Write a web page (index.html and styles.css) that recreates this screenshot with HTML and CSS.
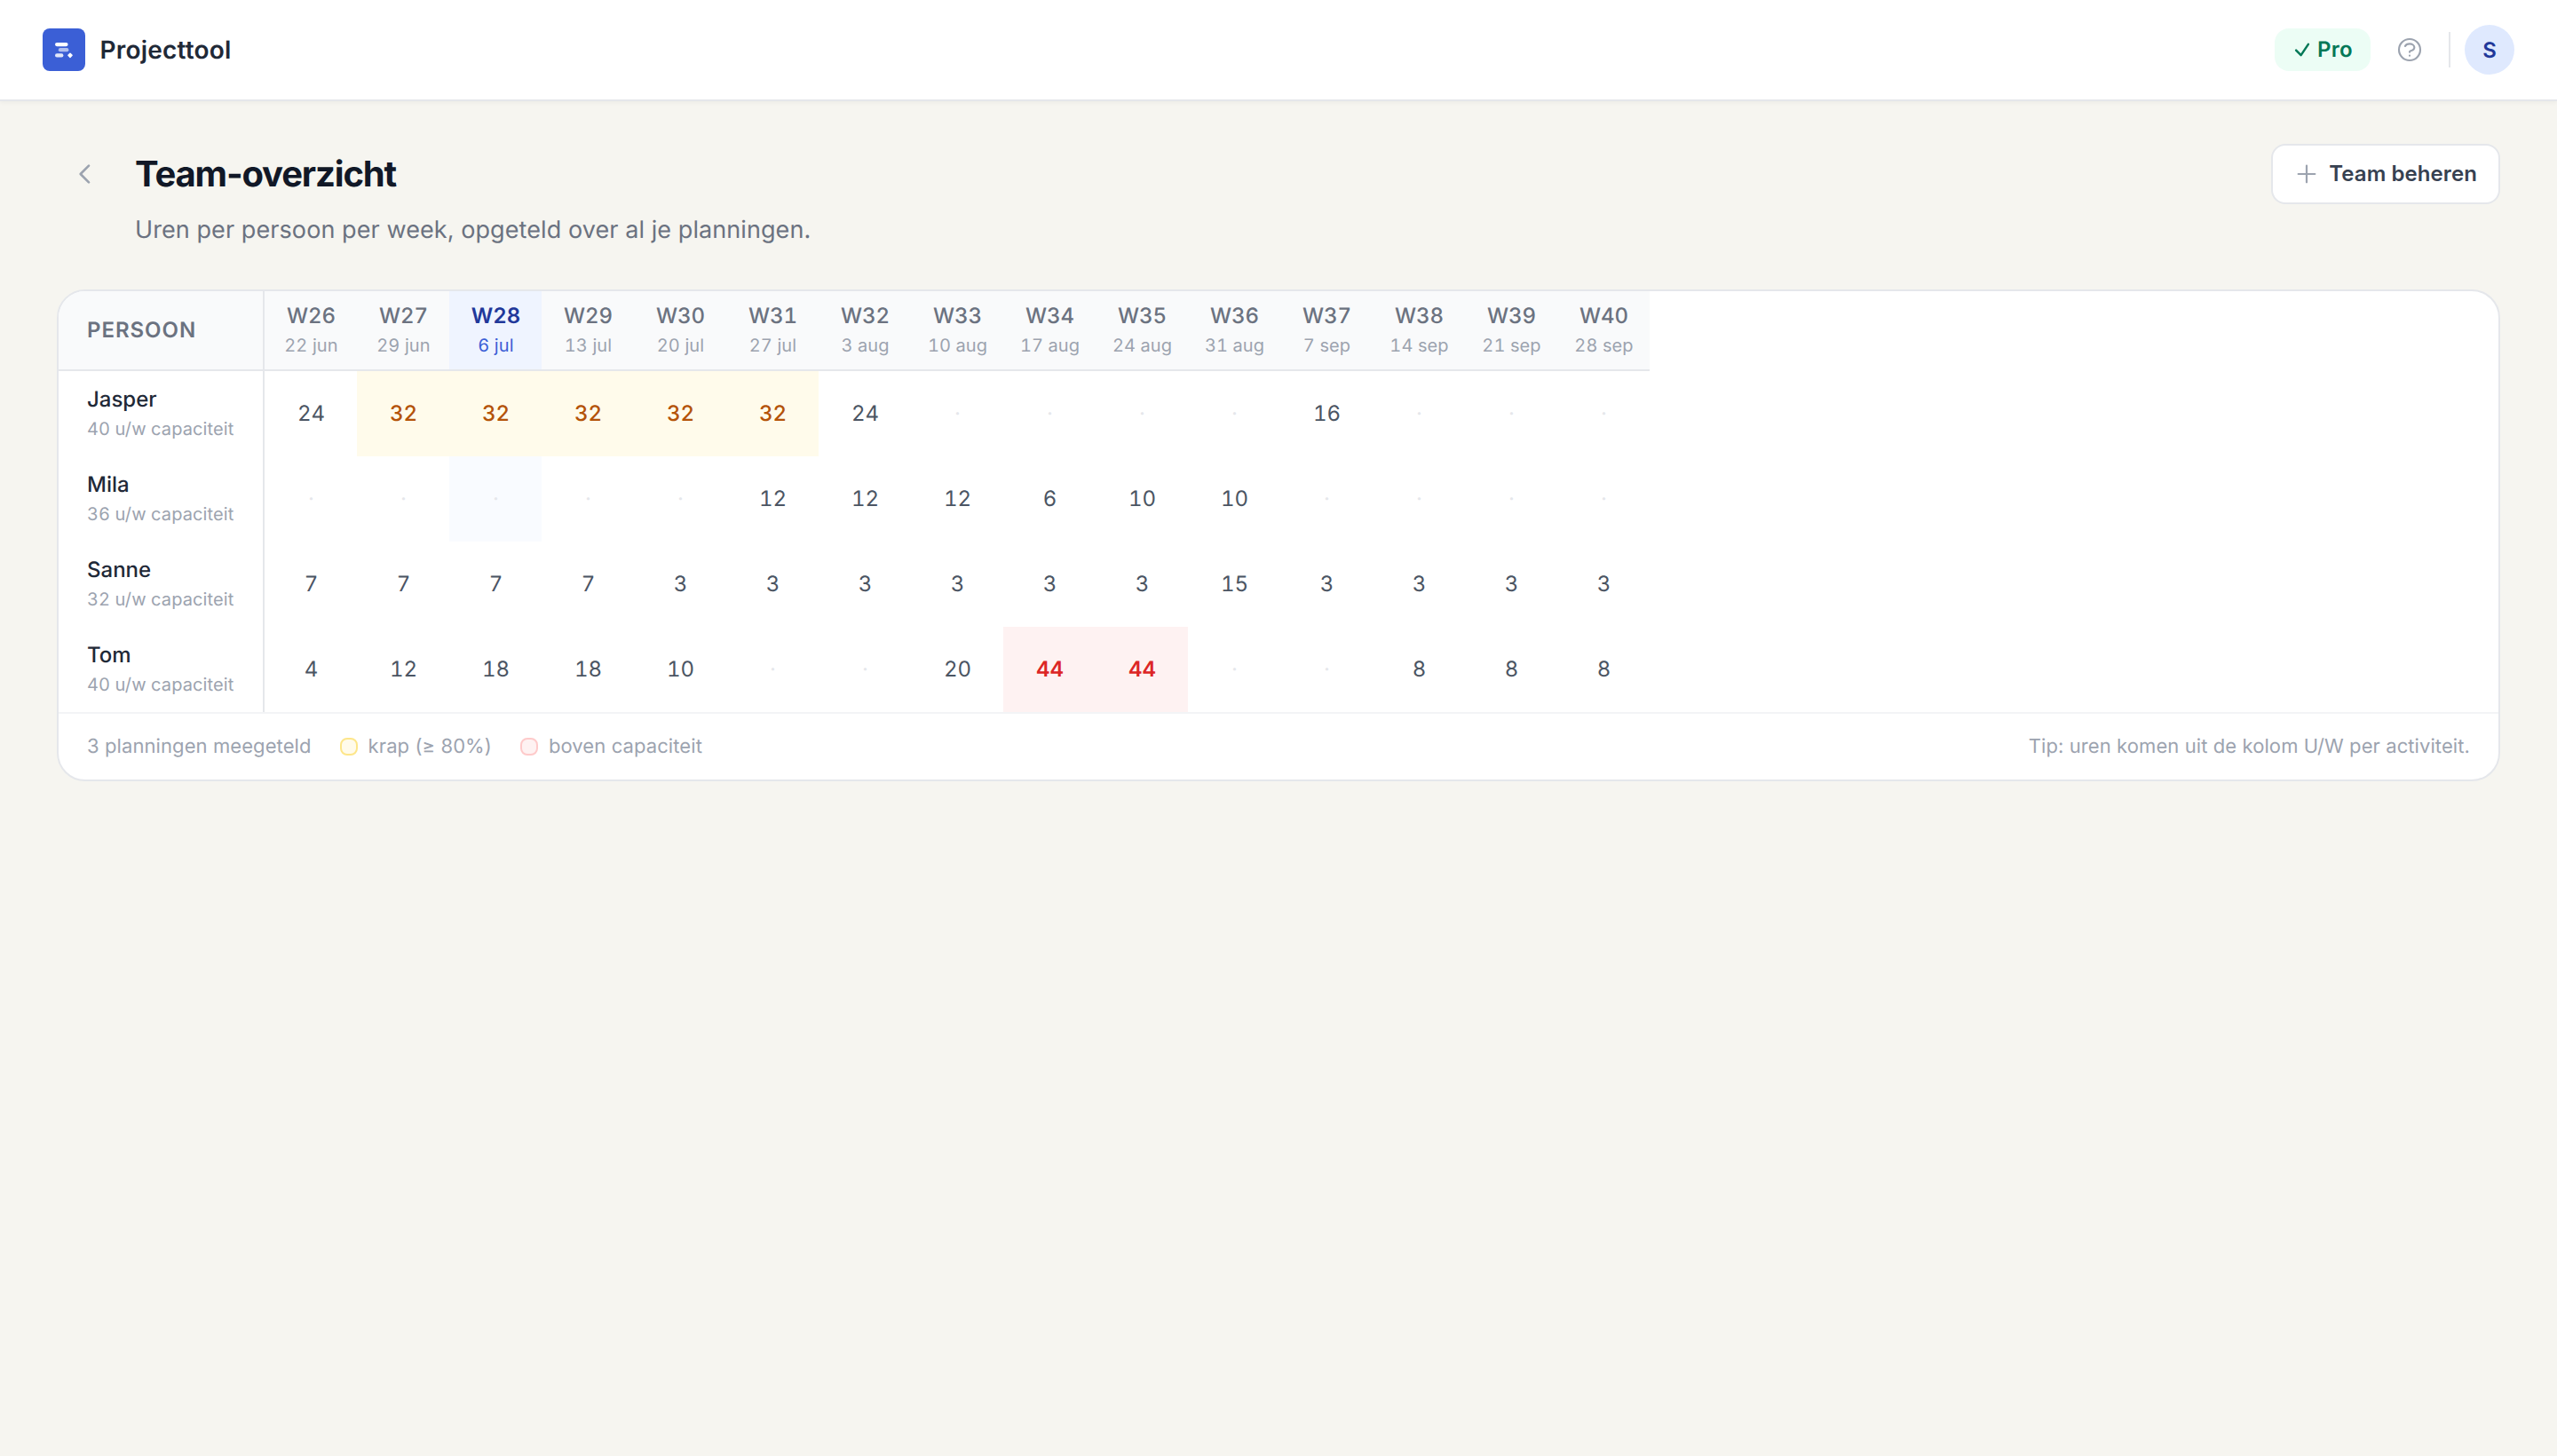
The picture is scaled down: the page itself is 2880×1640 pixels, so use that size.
FILE: index.html
```
<!DOCTYPE html>
<html lang="nl">
<head>
<meta charset="utf-8">
<title>Team-overzicht</title>
<link rel="stylesheet" href="styles.css">
</head>
<body>
<header class="topbar">
  <div class="brand">
    <svg class="logo" viewBox="0 0 48 48"><rect width="48" height="48" rx="8" fill="#3b5fd6"/><rect x="14" y="16" width="14.6" height="4.2" rx="2.1" fill="#fff"/><rect x="17.8" y="22.1" width="11.6" height="4.2" rx="2.1" fill="#fff" opacity=".6"/><rect x="14" y="28.3" width="9.4" height="4.2" rx="2.1" fill="#fff" opacity=".85"/><path d="M31 28.2l2.1 2.1-2.1 2.1-2.1-2.1z" fill="#fff" stroke="#fff" stroke-width="1.4" stroke-linejoin="round"/></svg>
    <span class="brand-name">Projecttool</span>
  </div>
  <div class="actions">
    <span class="plan"><svg class="plan-check" viewBox="0 0 24 24"><path d="m4.5 12.75 6 6 9-13.5"/></svg>Pro</span>
    <span class="help"><svg class="icon-lg" viewBox="0 0 24 24"><path d="M8.228 9c.549-1.165 2.03-2 3.772-2 2.21 0 4 1.343 4 3 0 1.4-1.278 2.575-3.006 2.907-.542.104-.994.54-.994 1.093m0 3h.01M21 12a9 9 0 11-18 0 9 9 0 0118 0z"/></svg></span>
    <span class="divider"></span>
    <span class="avatar">S</span>
  </div>
</header>
<main class="page">
  <div class="heading">
    <span class="back"><svg class="icon-lg" viewBox="0 0 24 24"><path d="M15 19l-7-7 7-7"/></svg></span>
    <h1 class="title">Team-overzicht</h1>
    <button class="manage"><svg class="icon-md" viewBox="0 0 24 24"><path d="M12 4v16m8-8H4"/></svg>Team beheren</button>
  </div>
  <p class="subtitle">Uren per persoon per week, opgeteld over al je planningen.</p>
  <section class="card">
    <table class="hours">
      <thead>
        <tr><th class="person-head">PERSOON</th><th>W26<small>22 jun</small></th><th>W27<small>29 jun</small></th><th class="now">W28<small>6 jul</small></th><th>W29<small>13 jul</small></th><th>W30<small>20 jul</small></th><th>W31<small>27 jul</small></th><th>W32<small>3 aug</small></th><th>W33<small>10 aug</small></th><th>W34<small>17 aug</small></th><th>W35<small>24 aug</small></th><th>W36<small>31 aug</small></th><th>W37<small>7 sep</small></th><th>W38<small>14 sep</small></th><th>W39<small>21 sep</small></th><th>W40<small>28 sep</small></th></tr>
      </thead>
      <tbody>
        <tr><td class="person">Jasper<small>40 u/w capaciteit</small></td><td>24</td><td class="tight">32</td><td class="tight">32</td><td class="tight">32</td><td class="tight">32</td><td class="tight">32</td><td>24</td><td class="none">·</td><td class="none">·</td><td class="none">·</td><td class="none">·</td><td>16</td><td class="none">·</td><td class="none">·</td><td class="none">·</td></tr>
        <tr><td class="person">Mila<small>36 u/w capaciteit</small></td><td class="none">·</td><td class="none">·</td><td class="none today">·</td><td class="none">·</td><td class="none">·</td><td>12</td><td>12</td><td>12</td><td>6</td><td>10</td><td>10</td><td class="none">·</td><td class="none">·</td><td class="none">·</td><td class="none">·</td></tr>
        <tr><td class="person">Sanne<small>32 u/w capaciteit</small></td><td>7</td><td>7</td><td>7</td><td>7</td><td>3</td><td>3</td><td>3</td><td>3</td><td>3</td><td>3</td><td>15</td><td>3</td><td>3</td><td>3</td><td>3</td></tr>
        <tr><td class="person">Tom<small>40 u/w capaciteit</small></td><td>4</td><td>12</td><td>18</td><td>18</td><td>10</td><td class="none">·</td><td class="none">·</td><td>20</td><td class="over">44</td><td class="over">44</td><td class="none">·</td><td class="none">·</td><td>8</td><td>8</td><td>8</td></tr>
      </tbody>
    </table>
    <footer class="legend">
      <span>3 planningen meegeteld</span>
      <span class="key"><i class="swatch swatch-tight"></i>krap (≥ 80%)</span>
      <span class="key"><i class="swatch swatch-over"></i>boven capaciteit</span>
      <span class="tip">Tip: uren komen uit de kolom U/W per activiteit.</span>
    </footer>
  </section>
</main>
</body>
</html>
```
FILE: styles.css
```
* { box-sizing: border-box; }

body {
  margin: 0;
  min-height: 100vh;
  background: #f6f5f0;
  color: #1f2937;
  font-family: Inter, "Liberation Sans", sans-serif;
  text-rendering: geometricPrecision;
}

svg {
  display: block;
  flex: none;
  fill: none;
  stroke-linecap: round;
  stroke-linejoin: round;
}

.topbar {
  display: flex;
  align-items: center;
  justify-content: space-between;
  height: 114px;
  padding: 0 48px;
  background: #fff;
  border-bottom: 2px solid #e5e7eb;
  box-shadow: 0 2px 4px rgba(0, 0, 0, .04);
}

.brand { display: flex; align-items: center; gap: 16.5px; }
.logo { width: 48px; height: 48px; }
.brand-name { font-size: 28px; font-weight: 600; line-height: 40px; letter-spacing: .2px; }

.actions { display: flex; align-items: center; gap: 16px; }

.plan {
  display: flex;
  align-items: center;
  gap: 6px;
  width: 108px;
  height: 48px;
  padding-left: 20px;
  border-radius: 16px;
  background: #ecfdf5;
  color: #047857;
  font-size: 24px;
  font-weight: 600;
  line-height: 30px;
  letter-spacing: .2px;
}

.plan-check { width: 22px; height: 22px; stroke: currentColor; stroke-width: 2.7; }

.help, .back {
  display: flex;
  align-items: center;
  justify-content: center;
  color: #9ca3af;
}

.help { width: 56px; height: 56px; }
.back { width: 64px; height: 64px; }

.icon-lg { width: 32px; height: 32px; stroke: currentColor; stroke-width: 1.6; }
.back .icon-lg { stroke-width: 2; }
.icon-md { width: 28px; height: 28px; stroke: #9ca3af; stroke-width: 1.9; }

.divider { width: 2px; height: 40px; background: #e5e7eb; }

.avatar {
  display: flex;
  align-items: center;
  justify-content: center;
  width: 56px;
  height: 56px;
  border-radius: 50%;
  background: #dfe9fe;
  color: #21389a;
  font-size: 24px;
  font-weight: 600;
}

.page { padding: 48px 64px; }

.heading { display: flex; align-items: center; height: 68px; }

.title {
  margin: 0 auto 0 24px;
  color: #111827;
  font-size: 40px;
  font-weight: 700;
  line-height: 56px;
  letter-spacing: -.029em;
}

.manage {
  display: flex;
  align-items: center;
  gap: 11px;
  height: 68px;
  padding: 0 24px;
  border: 2px solid #e5e7eb;
  border-radius: 16px;
  background: #fff;
  color: #374151;
  font: inherit;
  font-size: 24px;
  font-weight: 600;
  line-height: 30px;
  letter-spacing: .08px;
}

.subtitle {
  margin: 9px 0 47px 88px;
  color: #6b7280;
  font-size: 27px;
  line-height: 40px;
  letter-spacing: .08px;
}

.card {
  overflow: hidden;
  border: 2px solid #e5e7eb;
  border-radius: 32px;
  background: #fff;
}

.hours {
  width: 1792px;
  table-layout: fixed;
  border-collapse: separate;
  border-spacing: 0;
  font-size: 24px;
  line-height: 32px;
  font-variant-numeric: tabular-nums;
}

.hours th {
  width: 104px;
  height: 90px;
  padding: 12px 0 12px 1px;
  background: #f9fafb;
  border-bottom: 2px solid #e5e7eb;
  color: #6b7280;
  font-weight: 500;
}

.hours td {
  height: 96px;
  padding: 0 0 0 1px;
  color: #4b5563;
  text-align: center;
}

.hours small {
  display: block;
  margin-top: 2px;
  color: #9ca3af;
  font-size: 20px;
  font-weight: 400;
  line-height: 30px;
  letter-spacing: .1px;
}

.hours .person-head, .hours .person {
  width: 232px;
  padding-left: 32px;
  border-right: 2px solid #e5e7eb;
  text-align: left;
}

.hours .person-head { font-weight: 600; letter-spacing: .04em; }
.hours .person { color: #1f2937; font-weight: 500; }

.hours .now { background: #eff4ff; color: #21389a; font-weight: 600; }
.hours .now small { color: #3b5fd6; }
.hours .today { background: #f9fbff; }
.hours .none { color: #e5e7eb; }
.hours .tight { background: #fffbeb; color: #b45309; font-weight: 500; }
.hours .over { background: #fef2f2; color: #dc2626; font-weight: 600; }

.legend {
  display: flex;
  align-items: center;
  gap: 32px;
  height: 76px;
  padding: 0 32px;
  border-top: 2px solid #f3f4f6;
  color: #9ca3af;
  font-size: 22px;
  letter-spacing: .09px;
}

.key { display: flex; align-items: center; gap: 12px; }
.swatch { width: 20px; height: 20px; border: 2px solid; border-radius: 8px; }
.swatch-tight { background: #fffbeb; border-color: #fde68a; }
.swatch-over { background: #fef2f2; border-color: #fecaca; }
.tip { margin-left: auto; }
```
